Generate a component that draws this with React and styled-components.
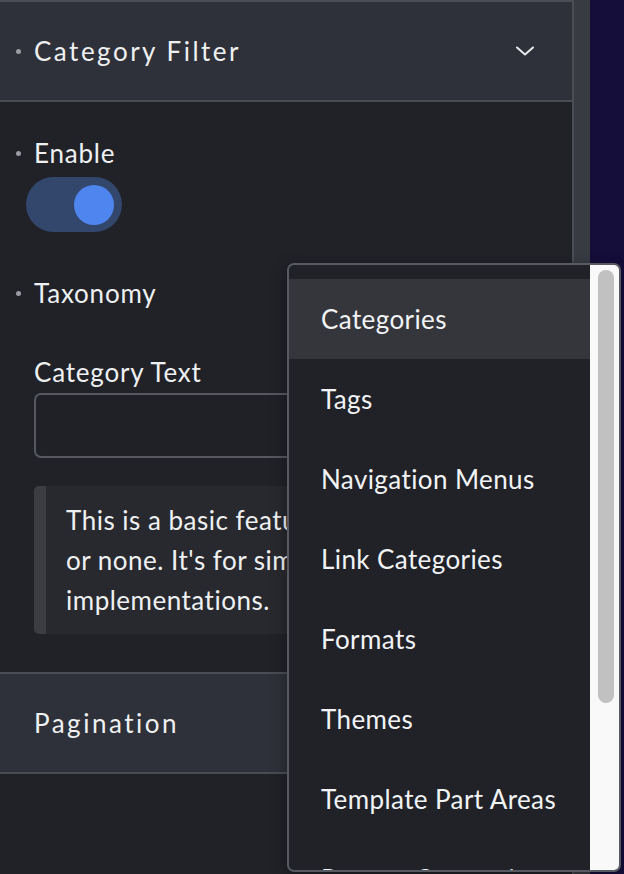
import React from "react";
import styled, { createGlobalStyle } from "styled-components";

const GlobalStyle = createGlobalStyle`
  html, body { margin: 0; padding: 0; }
  body {
    background: #150d3a;
    font-family: Lato, "Noto Sans", "Liberation Sans", sans-serif;
    -webkit-font-smoothing: antialiased;
  }
  * { box-sizing: border-box; }
`;

const Page = styled.div`
  position: relative;
  display: flex;
  width: 624px;
  height: 874px;
  overflow: hidden;
`;

const Panel = styled.div`
  width: 574px;
  flex: none;
  display: flex;
  flex-direction: column;
  background: #202228;
  border-right: 2px solid #4a4d55;
`;

const Strip = styled.div`
  width: 16px;
  flex: none;
  background: #393b43;
`;

const Backdrop = styled.div`
  flex: 1;
  background: #150d3a;
`;

const SectionHeader = styled.div`
  height: ${(p) => p.$h || 102}px;
  flex: none;
  display: flex;
  align-items: center;
  padding: 0 38px 0 ${(p) => (p.$bullet ? 16 : 34)}px;
  background: #2e3139;
  border-top: 2px solid #4a4d55;
  border-bottom: 2px solid #4a4d55;
`;

const Bullet = styled.span`
  width: 5px;
  height: 5px;
  border-radius: 50%;
  background: #9a9ca3;
  flex: none;
  margin-right: 13px;
`;

const HeaderTitle = styled.span`
  flex: 1;
  font-size: 26px;
  letter-spacing: 2.5px;
  color: #eef0f2;
`;

const Chevron = styled.svg`
  width: 18px;
  height: 10px;
  flex: none;
`;

const SectionBody = styled.div`
  display: flex;
  flex-direction: column;
  padding: 35px 0 38px 16px;
`;

const LabelRow = styled.div`
  display: flex;
  align-items: center;
  height: 32px;
  margin-top: ${(p) => p.$mt || 0}px;
  font-size: 26px;
  letter-spacing: 0.8px;
  color: #eef0f2;
`;

const SubLabel = styled.div`
  height: 32px;
  display: flex;
  align-items: center;
  margin: ${(p) => p.$mt || 0}px 0 0 18px;
  font-size: 26px;
  letter-spacing: 0.8px;
  color: #eef0f2;
`;

const Toggle = styled.div`
  width: 96px;
  height: 55px;
  margin: 8px 0 0 10px;
  border-radius: 28px;
  background: #33476d;
  display: flex;
  align-items: center;
  justify-content: flex-end;
  padding-right: 8px;
`;

const Knob = styled.div`
  width: 40px;
  height: 40px;
  border-radius: 50%;
  background: #4f85ef;
`;

const TextInput = styled.div`
  width: 506px;
  height: 65px;
  margin: 5px 0 0 18px;
  border: 2px solid #55585e;
  border-radius: 7px;
  background: #1f2127;
`;

const Notice = styled.div`
  width: 506px;
  margin: 28px 0 0 18px;
  padding: 14px 20px 14px 20px;
  border-left: 12px solid #3b3d43;
  border-radius: 5px;
  background: #27292e;
  font-size: 26px;
  letter-spacing: 0.5px;
  line-height: 40px;
  color: #eef0f2;
  white-space: nowrap;
  overflow: hidden;
`;

const Dropdown = styled.div`
  position: absolute;
  left: 287px;
  top: 263px;
  width: 334px;
  height: 609px;
  display: flex;
  background: #202228;
  border: 2px solid #575a61;
  border-radius: 7px;
  overflow: hidden;
  box-shadow: 0 4px 16px rgba(0, 0, 0, 0.35);
`;

const OptionList = styled.div`
  flex: 1;
  padding-top: 14px;
  overflow: hidden;
`;

const Option = styled.div`
  height: 80px;
  display: flex;
  align-items: center;
  padding-left: 32px;
  font-size: 26px;
  letter-spacing: 0.4px;
  color: #f2f3f5;
  white-space: nowrap;
  background: ${(p) => (p.$active ? "#35363b" : "transparent")};
`;

const ScrollTrack = styled.div`
  width: 29px;
  flex: none;
  background: #f9f9f9;
  padding: 5px 5px 0 8px;
`;

const ScrollThumb = styled.div`
  width: 16px;
  height: 433px;
  border-radius: 8px;
  background: #c1c1c1;
`;

const options = [
  "Categories",
  "Tags",
  "Navigation Menus",
  "Link Categories",
  "Formats",
  "Themes",
  "Template Part Areas",
  "Pattern Categories",
];

export default function App() {
  return (
    <>
      <GlobalStyle />
      <Page>
        <Panel>
          <SectionHeader $bullet>
            <Bullet />
            <HeaderTitle>Category Filter</HeaderTitle>
            <Chevron viewBox="0 0 18 10">
              <polyline
                points="1,1.5 9,8.5 17,1.5"
                fill="none"
                stroke="#e8e9ec"
                strokeWidth="2"
                strokeLinecap="round"
                strokeLinejoin="round"
              />
            </Chevron>
          </SectionHeader>
          <SectionBody>
            <LabelRow>
              <Bullet />
              Enable
            </LabelRow>
            <Toggle>
              <Knob />
            </Toggle>
            <LabelRow $mt={45}>
              <Bullet />
              Taxonomy
            </LabelRow>
            <SubLabel $mt={47}>Category Text</SubLabel>
            <TextInput />
            <Notice>
              This is a basic feature: one category
              <br />
              or none. It's for simple, lightweight
              <br />
              implementations.
            </Notice>
          </SectionBody>
          <SectionHeader $h={102}>
            <HeaderTitle>Pagination</HeaderTitle>
          </SectionHeader>
        </Panel>
        <Strip />
        <Backdrop />
        <Dropdown>
          <OptionList>
            {options.map((o, i) => (
              <Option key={o} $active={i === 0}>
                {o}
              </Option>
            ))}
          </OptionList>
          <ScrollTrack>
            <ScrollThumb />
          </ScrollTrack>
        </Dropdown>
      </Page>
    </>
  );
}
